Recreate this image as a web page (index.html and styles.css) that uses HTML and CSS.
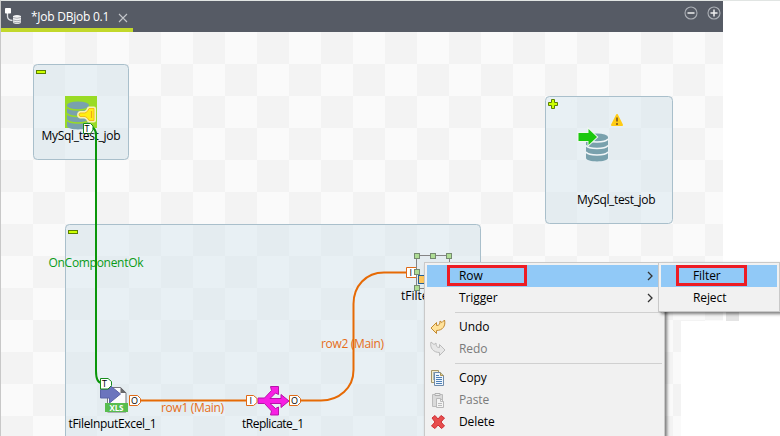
FILE: index.html
```html
<!DOCTYPE html>
<html lang="en">
<head>
<meta charset="utf-8">
<title>Job DBjob 0.1</title>
<link rel="stylesheet" href="styles.css">
</head>
<body>
<div class="editor">
  <header class="tabbar">
    <div class="tab">
      <svg class="tab-icon" width="18" height="18" viewBox="0 0 18 18">
        <path d="M3.500 6v3.500q0 3.500 5 4" fill="none" stroke="#dde0e4" stroke-width="1.300"/>
        <rect x="1" y="1" width="6" height="5.500" rx=".8" fill="#fff"/>
        <path d="M9 9q4-2 8 0v7q-4 2-8 0z" fill="#f2f3f4"/>
        <path d="M9 10.500q4 1.500 8 0M9 13q4 1.500 8 0M9 15q4 1.500 8 0" fill="none" stroke="#858a92" stroke-width=".7"/>
      </svg>
      <span class="tab-title">*Job DBjob 0.1</span>
      <svg class="tab-close" width="10" height="10" viewBox="0 0 10 10"><path d="M1 1l8 8M9 1L1 9" stroke="#c3c6ca" stroke-width="1.100"/></svg>
    </div>
    <div class="tools">
      <svg width="14" height="14" viewBox="0 0 14 14"><circle cx="7" cy="7" r="6" fill="none" stroke="#abafb5" stroke-width="1.100"/><path d="M3.500 7h7" stroke="#eee" stroke-width="1.500"/></svg>
      <svg width="14" height="14" viewBox="0 0 14 14"><circle cx="7" cy="7" r="6" fill="none" stroke="#abafb5" stroke-width="1.100"/><path d="M3.500 7h7M7 3.500v7" stroke="#eee" stroke-width="1.500"/></svg>
    </div>
  </header>
  <main class="canvas">
    <svg class="diagram" width="723" height="404" viewBox="0 32 723 404">
      <defs>
        <pattern id="check" x="1" y="0" width="64" height="64" patternUnits="userSpaceOnUse">
          <rect width="64" height="64" fill="#fafafa"/>
          <path d="M0 32h32v32H0zM32 0h32v32H32z" fill="#f3f3f3"/>
        </pattern>
        <g id="db">
          <path d="M0 3.500V24.500C0 29 22 29 22 24.500V3.500z" fill="#79a1ad"/>
          <ellipse cx="11" cy="3.500" rx="11" ry="3.500" fill="#79a1ad"/>
          <path class="db-line" d="M0 5.500C3 9.500 19 9.500 22 5.500M0 12C3 16 19 16 22 12M0 18.500C3 22.500 19 22.500 22 18.500"/>
        </g>
      </defs>
      <path d="M1 32h722v289h-42v115H1z" fill="url(#check)"/>
      <g class="group">
        <rect x="33.500" y="64.500" width="95" height="95" rx="4"/>
        <rect x="545.500" y="96.500" width="127" height="127" rx="4"/>
        <rect x="65.500" y="224.500" width="415" height="230" rx="4"/>
      </g>
      <g class="toggle">
        <rect x="36.500" y="70.500" width="9" height="3"/>
        <rect x="68.500" y="230.500" width="9" height="3"/>
        <path d="M551.500 99.500h3v3h3v3h-3v3h-3v-3h-3v-3h3z"/>
      </g>

      <rect x="65" y="96" width="32" height="32" fill="#99db25"/>
      <use href="#db" x="67" y="101.500" class="on-green"/>
      <path d="M80 113h5q3-1 4-4.500h5v12h-5q-1-3-4-4h-5q-2-1.500 0-3.500z" fill="none" stroke="#f6f3b0" stroke-width="4" stroke-linejoin="round"/>
      <path d="M80 113h5q3-1 4-4.500h5v12h-5q-1-3-4-4h-5q-2-1.500 0-3.500z" fill="#ffef12" stroke="#f5bd16"/>
      <path d="M91.500 111v7" stroke="#f0a818" stroke-width="1.200"/>

      <use href="#db" x="586" y="133.500" class="on-group"/>
      <path d="M578.500 133h10v-4l8.500 8-8.500 8v-4h-10z" fill="#1bc80e" stroke="#eef8ed" stroke-width="2" paint-order="stroke"/>
      <path d="M617 115l5 10h-10z" fill="#ffcc16" stroke="#ffcc16" stroke-width="2" stroke-linejoin="round"/>
      <path d="M617 117.500v4M617 123v2" stroke="#8b6420" stroke-width="1.800"/>
      <text x="577" y="204" textLength="78.500">MySql_test_job</text>

      <g class="port green"><path d="M83.500 123.500h7l2.500 2.500v4l-2.500 3.500h-7z"/><text x="84.500" y="131.500">T</text></g>
      <text x="41.500" y="140" textLength="79">MySql_test_job</text>
      <path class="trigger" d="M93 128C95 129 96 131 96 136V371Q96 383 102 383"/>
      <text class="green-label" x="48.500" y="267" textLength="95">OnComponentOk</text>

      <g class="flow">
        <path d="M140 400.500H247M300 400.500H321C339 400.500 353.500 388 353.500 370V304C353.500 286 366 272.500 384 272.500H407"/>
      </g>

      <path d="M107.500 387.500h13l5.500 5.500v19h-18.500z" fill="#fbfbfd" stroke="#77777a"/>
      <path d="M120.500 387l6 6h-6z" fill="#68686c"/>
      <path d="M100.500 389.500h9v-4.500l11 9-11 9v-5h-9z" fill="#6b74bd" stroke="#5a62a7"/>
      <rect x="105" y="403" width="23" height="9" fill="#58bd4f"/>
      <text class="xls" x="109.500" y="410.500" textLength="14">XLS</text>
      <g class="port green"><path d="M100.500 378.500h7.500l3.500 3v4l-3.500 3.500h-7.500z"/><text x="102" y="387">T</text></g>
      <g class="port orange"><path d="M129.500 395.500h8l3 3v4l-3 3h-8z"/><text x="131" y="404" textLength="7.500">O</text></g>
      <text x="68.500" y="428" textLength="88">tFileInputExcel_1</text>
      <text class="orange-label" x="161" y="412" textLength="63">row1 (Main)</text>

      <path d="M258 398h6.500l7-7.500-1-4h8v8l-3-1.500-5.500 5.500h11v-4l8 6.500-8 6.500v-4h-11l5.500 5 3-1.500v8h-8l1-4-7-7.500H258z" fill="#f81fe4" stroke="#b714aa"/>
      <g class="port orange"><path d="M246.500 395.500h7l3.500 3v4l-3.500 3h-7z"/><text x="249.500" y="404">I</text></g>
      <g class="port orange"><path d="M289.500 395.500h8l3 3v4l-3 3h-8z"/><text x="291" y="404" textLength="7.500">O</text></g>
      <text x="242" y="428" textLength="62">tReplicate_1</text>
      <text class="orange-label" x="321" y="348" textLength="63">row2 (Main)</text>

      <rect x="418.500" y="275.500" width="16" height="8" fill="#fec65a" stroke="#246098"/>
      <g class="port orange"><path d="M406.500 267.500h10v10h-10z"/><text x="409.500" y="276">I</text></g>
      <text x="401" y="300">tFilter</text>
      <rect x="416.500" y="255.500" width="33" height="33" fill="none" stroke="#858585"/>
      <g class="handle">
        <rect x="414.500" y="253.500" width="5" height="5"/><rect x="430.500" y="253.500" width="5" height="5"/><rect x="446.500" y="253.500" width="5" height="5"/>
        <rect x="414.500" y="269.500" width="5" height="5"/><rect x="414.500" y="285.500" width="5" height="5"/>
      </g>
    </svg>
  </main>
  <div class="scroll-stub"></div>

  <nav class="menu main-menu">
    <div class="item active"><span class="icon"></span><span class="label">Row</span><svg class="chevron" width="6" height="10" viewBox="0 0 6 10"><path d="M1 1l4 4-4 4"/></svg><i class="mark mark-row"></i></div>
    <div class="item"><span class="icon"></span><span class="label">Trigger</span><svg class="chevron" width="6" height="10" viewBox="0 0 6 10"><path d="M1 1l4 4-4 4"/></svg></div>
    <div class="separator"></div>
    <div class="item"><span class="icon"><svg width="16" height="16" viewBox="0 0 16 16"><path d="M1 9l5.500-5.500v3C9.500 6.500 10 5 10 2l2 1.500L14.500 1c1.500 6-2 10.500-8 10.500v3z" fill="#ffe29b" stroke="#c38a31" stroke-linejoin="round"/></svg></span><span class="label">Undo</span></div>
    <div class="item disabled"><span class="icon"><svg width="16" height="16" viewBox="0 0 16 16"><path d="M15 9L9.500 3.500v3C6.500 6.500 6 5 6 2L4 3.500 1 1C-.5 7 3.500 11.500 9.500 11.500v3z" fill="#e7e7e7" stroke="#bcbcbc" stroke-linejoin="round"/></svg></span><span class="label">Redo</span></div>
    <div class="separator"></div>
    <div class="item"><span class="icon"><svg width="16" height="16" viewBox="0 0 16 16"><path d="M1.500 .5h7v12h-7z" fill="#f3ecd0" stroke="#a69768"/><path d="M3 3h2M3 5h2M3 7h2M3 9h2" stroke="#5e85ad"/><path d="M4.500 2.500h6l3 3v10h-9z" fill="#eff6fd" stroke="#6f8baa"/><path d="M10.500 2.500v3h3" fill="#e7cf82" stroke="#a89158"/><path d="M6 5.500h3M6 7.500h6M6 9.500h6M6 11.500h6M6 13.500h6" stroke="#4d7fb5"/></svg></span><span class="label">Copy</span></div>
    <div class="item disabled"><span class="icon"><svg width="16" height="16" viewBox="0 0 16 16"><path d="M2.500 2.500h10v12h-10z" fill="#dadada" stroke="#bbb"/><path d="M5 3.500v-2h5v2z" fill="#eee" stroke="#b0b0b0"/><path d="M6.500 6.500h4l3 3v6h-7z" fill="#f4f4f4" stroke="#b9b9b9"/><path d="M10.500 6.500v3h3M8 11.500h4M8 13.500h4" fill="none" stroke="#bbb"/></svg></span><span class="label">Paste</span></div>
    <div class="item"><span class="icon"><svg width="16" height="16" viewBox="0 0 16 16"><path d="M2 4l3-2.500L8 5l3-3.500L14.500 4l-3.500 4 3.500 4-3 2.500L8 11l-3 3.500L1.500 12 5 8z" fill="#e74d4d" stroke="#cf2f35" stroke-linejoin="round"/></svg></span><span class="label">Delete</span></div>
  </nav>
  <nav class="menu submenu">
    <div class="item active"><span class="label">Filter</span><i class="mark mark-filter"></i></div>
    <div class="item"><span class="label">Reject</span></div>
  </nav>
</div>
</body>
</html>
```
FILE: styles.css
```css
* { box-sizing: border-box; }
body { margin: 0; background: #fff; font: 12px/16px "Open Sans", "Noto Sans", sans-serif; color: #000; }
.editor { position: relative; display: flex; flex-direction: column; width: 780px; height: 436px; overflow: hidden; border-top: 1px solid #e1e5e3; border-left: 1px solid #c8c8c8; }
.tabbar { display: flex; flex: none; justify-content: space-between; width: 722px; height: 31px; background: #565b65; }
.tab { display: flex; width: 132px; border-bottom: 4px solid #c2d82b; color: #fff; }
.tab-icon { flex: none; margin: 6px 0 0 3px; }
.tab-title { width: 76px; margin: 8px 0 0 9px; white-space: nowrap; letter-spacing: -.25px; }
.tab-close { margin: 12px 0 0 11px; }
.tools { display: flex; gap: 9px; padding: 4.5px 2.5px 0 0; }
.canvas { flex: none; width: 723px; height: 404px; margin-left: -1px; }
.diagram { display: block; }
.diagram text { font-size: 12px; }
.group rect { fill: rgba(210, 228, 237, .45); stroke: #a9bfcb; }
.toggle { fill: #ccff00; stroke: #5c8000; }
.db-line { fill: none; stroke: var(--gap); stroke-width: 1.5; }
.on-green { --gap: #99db25; }
.on-group { --gap: #f0f5f7; }
.trigger { fill: none; stroke: #0a960a; stroke-width: 2; }
.flow path { fill: none; stroke: #e66a05; stroke-width: 2; }
.port path { fill: #fff; }
.diagram .port text { font-size: 9px; }
.port.green path { stroke: #168c1c; }
.port.orange path { stroke: #df6a17; }
.green-label { fill: #0a9b18; }
.orange-label { fill: #e66d18; }
.diagram .xls { font-size: 8px; font-weight: 700; fill: #fff; }
.handle rect { fill: #aedd94; stroke: #758b70; }
.scroll-stub { position: absolute; left: 725px; top: 311px; width: 13px; height: 9px; background: #e4e4e4; }
.menu { position: absolute; background: #f1f1f1; border: 1px solid #c9c9c9; padding: 2px; }
.main-menu { left: 423px; top: 261px; width: 241px; height: 190px; box-shadow: 2px 3px 3px rgba(0, 0, 0, .5); }
.submenu { left: 657px; top: 261px; width: 122px; height: 50px; box-shadow: 3px 2px 3px rgba(0, 0, 0, .5); }
.item { position: relative; display: flex; align-items: center; height: 22px; }
.icon { display: flex; width: 32px; padding-left: 3px; }
.label { letter-spacing: -.1px; }
.submenu .label { margin-left: 32px; }
.active { background: #91c9f7; }
.disabled { color: #7b7b7b; }
.chevron { margin: 0 9px 0 auto; fill: none; stroke: #333; stroke-width: 1.3; }
.separator { height: 7px; margin-left: 28px; background: linear-gradient(#d0d0d0, #d0d0d0) 0 3px / 100% 1px no-repeat; }
.mark { position: absolute; top: 0; height: 21px; border: 3px solid #ed1c24; }
.mark-row { left: 20px; width: 80px; }
.mark-filter { left: 15px; width: 71px; }
```
